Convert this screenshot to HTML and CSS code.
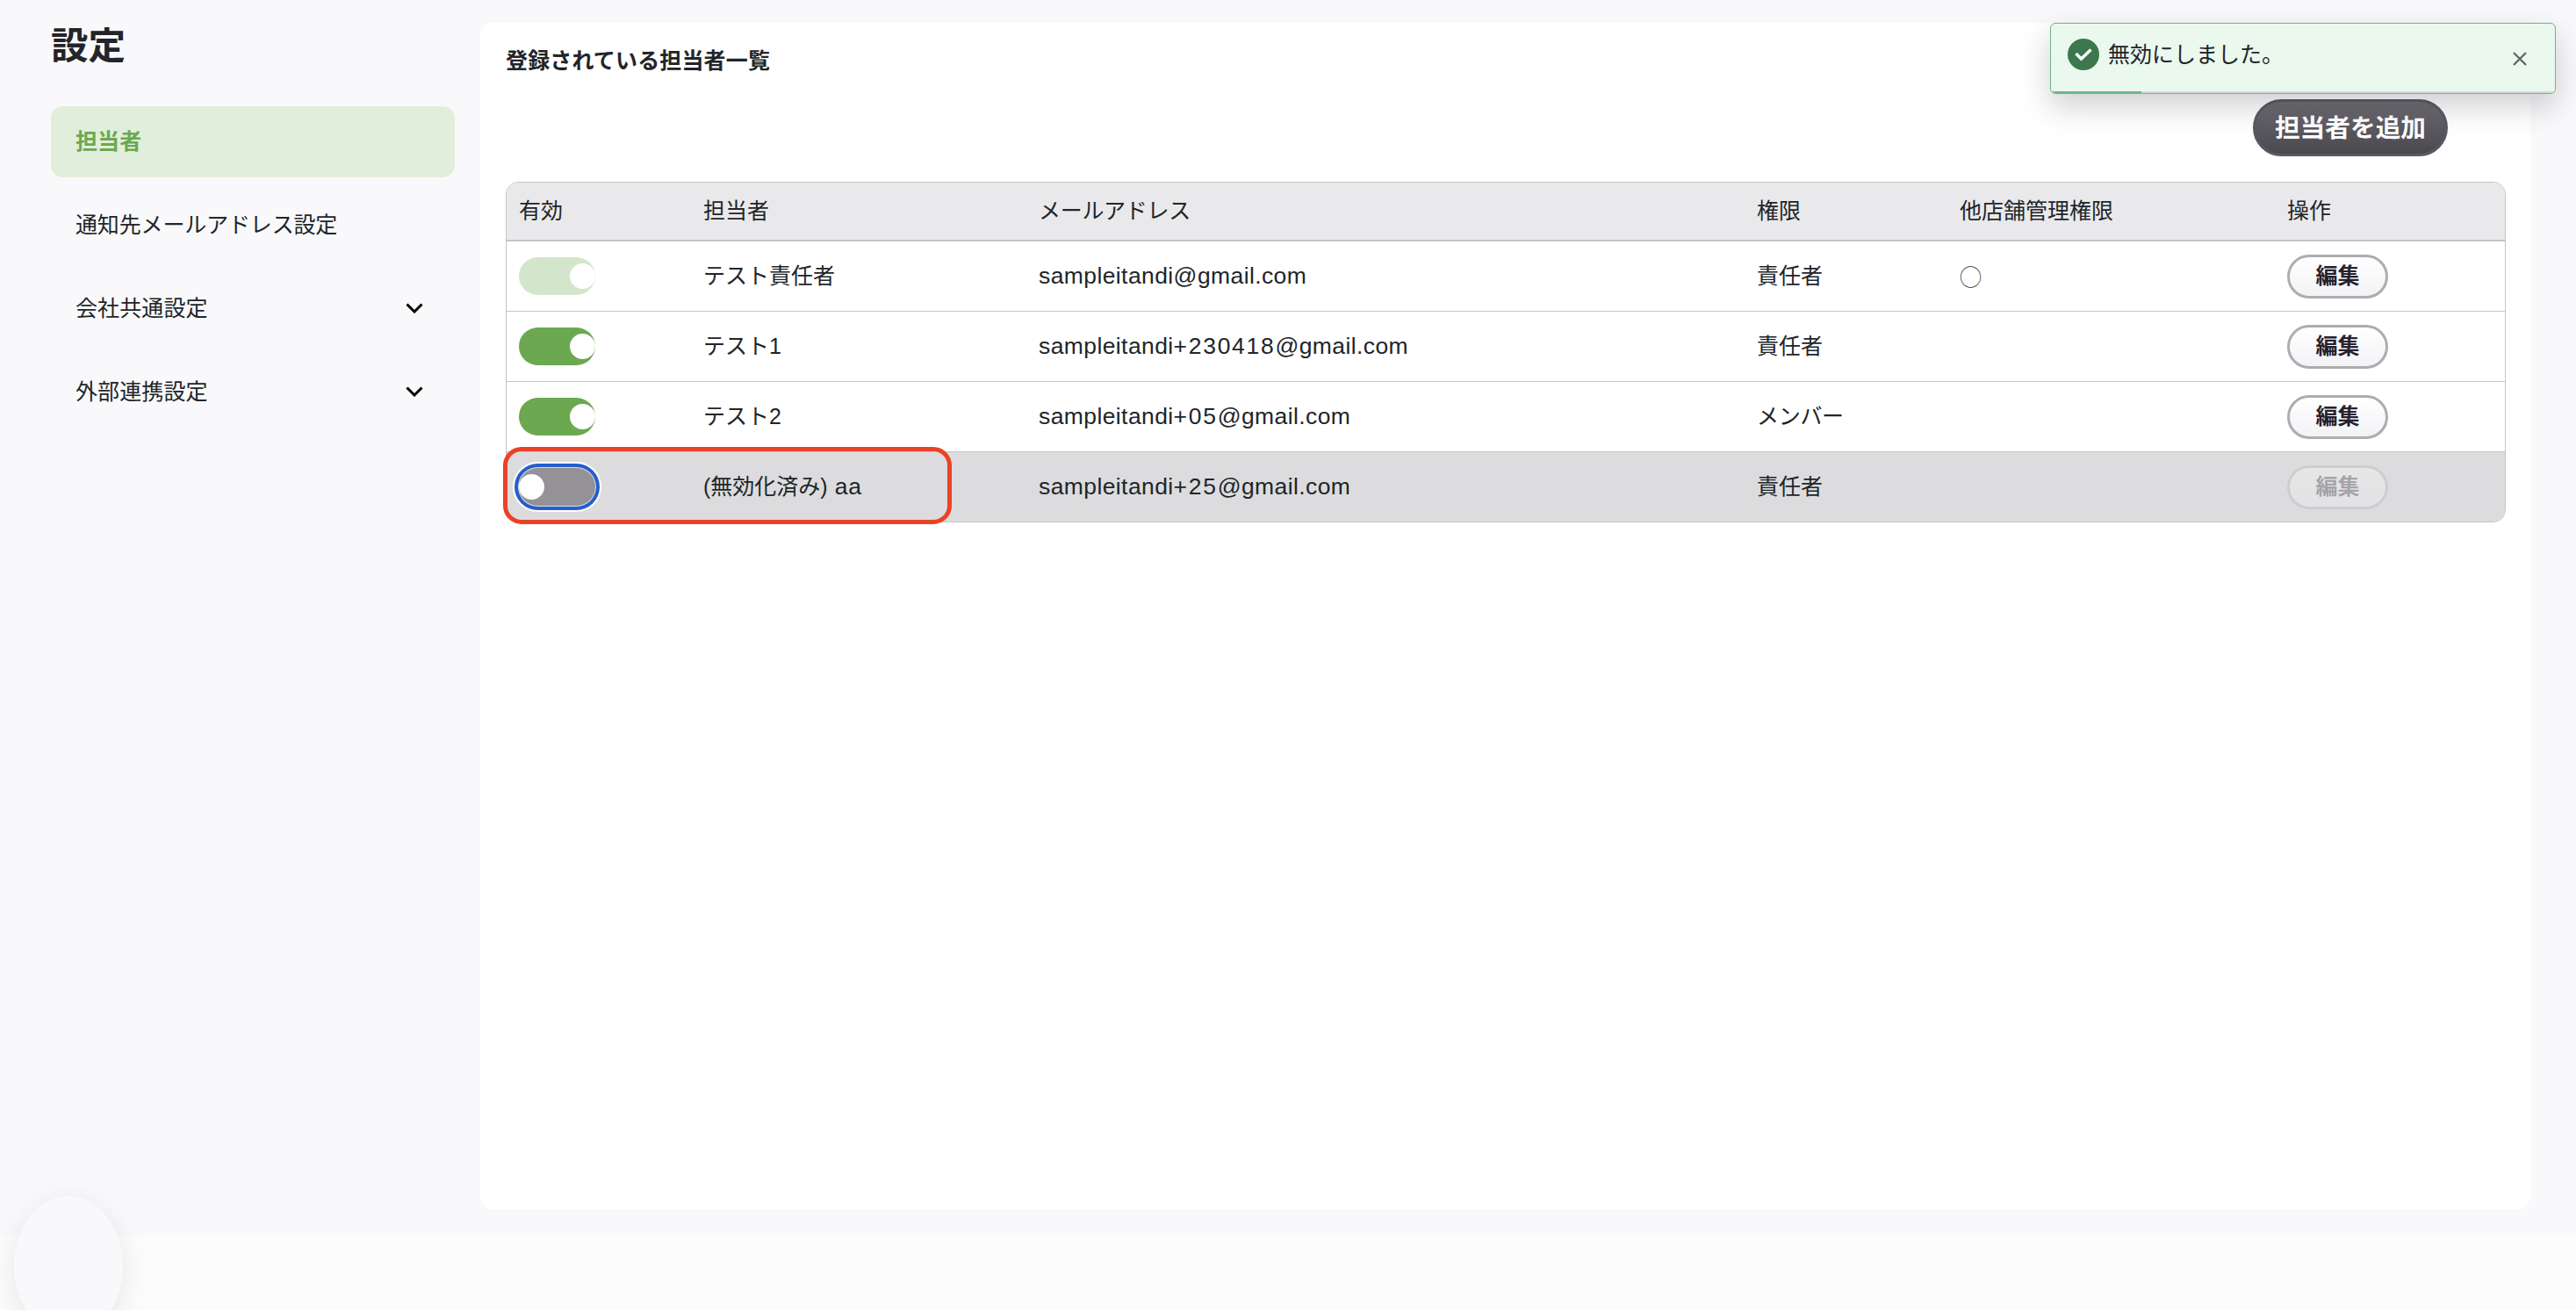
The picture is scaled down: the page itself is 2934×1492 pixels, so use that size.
FILE: index.html
```html
<!DOCTYPE html>
<html lang="ja">
<head>
<meta charset="utf-8">
<title>設定</title>
<link rel="stylesheet" href="styles.css">
</head>
<body>
<div class="page">
  <aside class="sidebar">
    <h1 class="sidebar-title">設定</h1>
    <nav class="menu">
      <a class="menu-item active">担当者</a>
      <a class="menu-item narrow">通知先メールアドレス設定</a>
      <a class="menu-item">会社共通設定
        <svg class="chevron" viewBox="0 0 20 12"><path d="M1.5 1.5 10 10 18.500 1.500"/></svg></a>
      <a class="menu-item">外部連携設定
        <svg class="chevron" viewBox="0 0 20 12"><path d="M1.5 1.5 10 10 18.500 1.500"/></svg></a>
    </nav>
  </aside>
  <main class="panel">
    <h2 class="panel-title">登録されている担当者一覧</h2>
    <div class="actions"><button class="btn-add">担当者を追加</button></div>
    <div class="table">
      <div class="row head">
        <div>有効</div><div>担当者</div><div class="kana">メールアドレス</div><div>権限</div><div>他店舗管理権限</div><div>操作</div>
      </div>
      <div class="row">
        <div><span class="toggle on locked"></span></div><div>テスト責任者</div><div class="mail">sampleitandi@gmail.com</div><div>責任者</div><div class="mark">◯</div><div><button class="btn-edit">編集</button></div>
      </div>
      <div class="row">
        <div><span class="toggle on"></span></div><div>テスト1</div><div class="mail">sampleitandi<span class="tag">+230418</span>@gmail.com</div><div>責任者</div><div></div><div><button class="btn-edit">編集</button></div>
      </div>
      <div class="row">
        <div><span class="toggle on"></span></div><div>テスト2</div><div class="mail">sampleitandi<span class="tag">+05</span>@gmail.com</div><div class="kana">メンバー</div><div></div><div><button class="btn-edit">編集</button></div>
      </div>
      <div class="row disabled">
        <div><span class="toggle focused"></span></div><div>(無効化済み)<span class="latin"> aa</span></div><div class="mail">sampleitandi<span class="tag">+25</span>@gmail.com</div><div>責任者</div><div></div><div><button class="btn-edit" disabled>編集</button></div>
        <span class="highlight"></span>
      </div>
    </div>
  </main>
</div>
<footer class="footer"></footer>
<div class="bubble"></div>
<div class="toast">
  <svg class="toast-icon" viewBox="0 0 36 36"><circle cx="18" cy="18" r="18"/><path d="M9.500 17 15.500 23 26.500 12.500"/></svg>
  <span class="toast-text">無効にしました。</span>
  <svg class="toast-close" viewBox="0 0 16 16"><path d="M1 1 15 15M15 1 1 15"/></svg>
  <div class="progress"><div class="progress-bar"></div></div>
</div>
</body>
</html>
```
FILE: styles.css
```css
* { box-sizing: border-box; }
body {
  margin: 0;
  height: 1492px;
  overflow: hidden;
  position: relative;
  background: #f9f9fb;
  color: #212529;
  font: 25px/38px "Liberation Sans", "Noto Sans CJK JP", sans-serif;
}
.page {
  display: flex;
  gap: 29px;
  height: 1406px;
  padding: 26px 52px 29px 58px;
}
.sidebar { width: 460px; }
.sidebar-title {
  margin: 0;
  padding-top: 2px;
  height: 95px;
  font-size: 42.500px;
  line-height: 50px;
}
.menu { display: flex; flex-direction: column; gap: 14px; }
.menu-item {
  display: flex;
  align-items: center;
  justify-content: space-between;
  height: 81px;
  padding: 0 36px 2px 28px;
  border-radius: 14px;
  letter-spacing: 0.100px;
}
.menu-item.narrow { letter-spacing: -0.150px; }
.menu-item.active {
  background: #e1eedc;
  color: #6ba84f;
  font-weight: bold;
}
.chevron {
  width: 20px;
  height: 12px;
  fill: none;
  stroke: #000;
  stroke-width: 3;
}
.panel {
  flex: 1;
  padding: 24px 28px 0 29px;
  background: #fff;
  border-radius: 14px;
}
.panel-title {
  margin: 0 0 25px;
  font-size: 25px;
  line-height: 38px;
  letter-spacing: 0.150px;
}
.actions {
  display: flex;
  justify-content: flex-end;
  padding-right: 66px;
  margin-bottom: 29px;
}
button { font-family: inherit; font-weight: bold; margin: 0; padding: 0; }
.btn-add {
  width: 222px;
  height: 65px;
  padding-bottom: 4px;
  border: 3px solid #5a5860;
  border-radius: 33px;
  background: linear-gradient(#6e6c72, #4a474f);
  color: #fff;
  font-size: 28.700px;
}
.table {
  border: 1px solid #c5c5c8;
  border-radius: 14px;
}
.row {
  display: grid;
  grid-template-columns: 210px 382px 818px 231px 373px 1fr;
  align-items: center;
  height: 80px;
  padding-left: 14px;
  border-bottom: 1px solid #c5c5c8;
}
.row > div {
  display: flex;
  align-items: center;
  line-height: 38px;
  padding-bottom: 2px;
  white-space: pre;
}
.row.head {
  height: 67px;
  border-bottom-width: 2px;
  background: #e9e9eb;
  border-radius: 13px 13px 0 0;
}
.row.disabled {
  position: relative;
  height: 79px;
  border-bottom: 0;
  background: #dcdcde;
  border-radius: 0 0 13px 13px;
}
.row .kana { letter-spacing: -0.300px; }
.mail { font-size: 26.500px; letter-spacing: 0.4px; }
.tag { letter-spacing: 1.700px; }
.latin { font-size: 26.500px; letter-spacing: 0.800px; }
.mark { font-family: "Noto Sans CJK JP", sans-serif; font-weight: 300; }
.row .toggle, .row .btn-edit { position: relative; top: 1px; }
.toggle {
  width: 87px;
  height: 43px;
  border-radius: 22px;
  background: #949197;
}
.toggle::after {
  content: "";
  position: absolute;
  top: 7px;
  left: 0;
  width: 29px;
  height: 29px;
  border-radius: 50%;
  background: #fff;
}
.toggle.on { background: #6ba84f; }
.toggle.on::after { left: 58px; }
.toggle.locked { background: #d3e6cb; }
.toggle.focused {
  box-shadow: 0 0 0 1px #dcdce2, 0 0 0 5px #245fcb, 0 0 0 7px #fff;
}
.btn-edit {
  width: 115px;
  height: 50px;
  border: 3px solid #adadb1;
  border-radius: 25px;
  background: linear-gradient(#fff, #f3f3f6);
  color: #26222f;
  font-size: 25px;
  line-height: 36px;
  padding-bottom: 2px;
}
.btn-edit:disabled { opacity: 0.3; }
.highlight {
  position: absolute;
  left: -4px;
  top: -6px;
  width: 511px;
  height: 88px;
  border: 5px solid #eb4227;
  border-radius: 21px;
}
.footer { height: 86px; background: #fcfcfc; }
.bubble {
  position: absolute;
  left: 16px;
  top: 1362px;
  width: 124px;
  height: 160px;
  border-radius: 50%;
  background: #f9f9fc;
  box-shadow: 0 8px 34px rgba(0, 0, 0, 0.09);
}
.toast {
  position: absolute;
  left: 2335px;
  top: 26px;
  width: 576px;
  height: 81px;
  display: flex;
  align-items: flex-start;
  padding: 17px 32px 0 19px;
  border: 1px solid #6bb88b;
  border-radius: 6px;
  background: #eaf8ee;
  box-shadow: 0 14px 34px rgba(40, 36, 50, 0.22);
  overflow: hidden;
}
.toast-icon { width: 36px; height: 36px; fill: #3d774e; }
.toast-icon path { fill: none; stroke: #fff; stroke-width: 3.500; }
.toast-text { margin-left: 10px; line-height: 36px; }
.toast-close {
  width: 16px;
  height: 16px;
  margin: 15px 0 0 auto;
  stroke: #63666a;
  stroke-width: 2.400;
}
.progress {
  position: absolute;
  left: 0;
  right: 0;
  bottom: 0;
  height: 2px;
  background: #d8d9dc;
}
.progress-bar { width: 103px; height: 2px; background: #6bb88b; }
```
